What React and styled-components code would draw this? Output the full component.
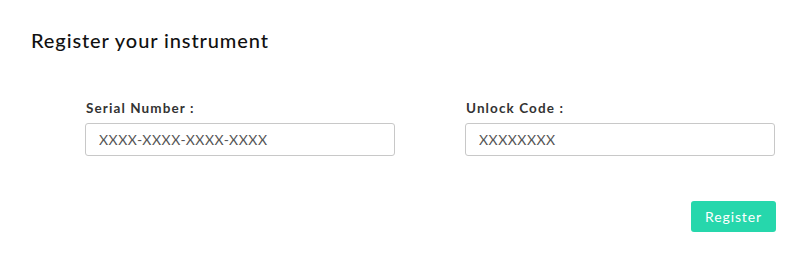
import React from "react";
import styled, { createGlobalStyle } from "styled-components";

const GlobalStyle = createGlobalStyle`
  body {
    margin: 0;
    background: #fff;
    font-family: Lato, "Noto Sans", sans-serif;
  }
`;

const Page = styled.div`
  padding: 28px 31px 0 31px;
`;

const Title = styled.h2`
  margin: 0;
  font-size: 20px;
  font-weight: 500;
  color: #111;
  letter-spacing: 0.9px;
`;

const Fields = styled.div`
  display: grid;
  grid-template-columns: 310px 310px;
  column-gap: 70px;
  padding-left: 54px;
  margin-top: 48px;
`;

const Field = styled.div`
  display: flex;
  flex-direction: column;
`;

const Label = styled.label`
  font-size: 13.5px;
  font-weight: 700;
  color: #333;
  letter-spacing: 1.1px;
  margin-left: 1px;
  margin-bottom: 7px;
`;

const Input = styled.input`
  box-sizing: border-box;
  height: 33px;
  width: 100%;
  padding: 0 13px;
  border: 1px solid #c8c8c8;
  border-radius: 3px;
  font-family: inherit;
  font-size: 14px;
  letter-spacing: 0.5px;
  color: #555;
  outline: none;
  &::placeholder {
    color: #555;
  }
`;

const Actions = styled.div`
  display: flex;
  justify-content: flex-end;
  margin-top: 45px;
`;

const Button = styled.button`
  height: 31px;
  width: 85px;
  border: 0;
  border-radius: 3px;
  background: #26d7ac;
  color: #fff;
  font-family: inherit;
  font-size: 14px;
  letter-spacing: 0.9px;
  cursor: pointer;
`;

export default function App() {
  return (
    <>
      <GlobalStyle />
      <Page>
        <Title>Register your instrument</Title>
        <Fields>
          <Field>
            <Label>Serial Number :</Label>
            <Input placeholder="XXXX-XXXX-XXXX-XXXX" />
          </Field>
          <Field>
            <Label>Unlock Code :</Label>
            <Input placeholder="XXXXXXXX" />
          </Field>
        </Fields>
        <Actions>
          <Button>Register</Button>
        </Actions>
      </Page>
    </>
  );
}
